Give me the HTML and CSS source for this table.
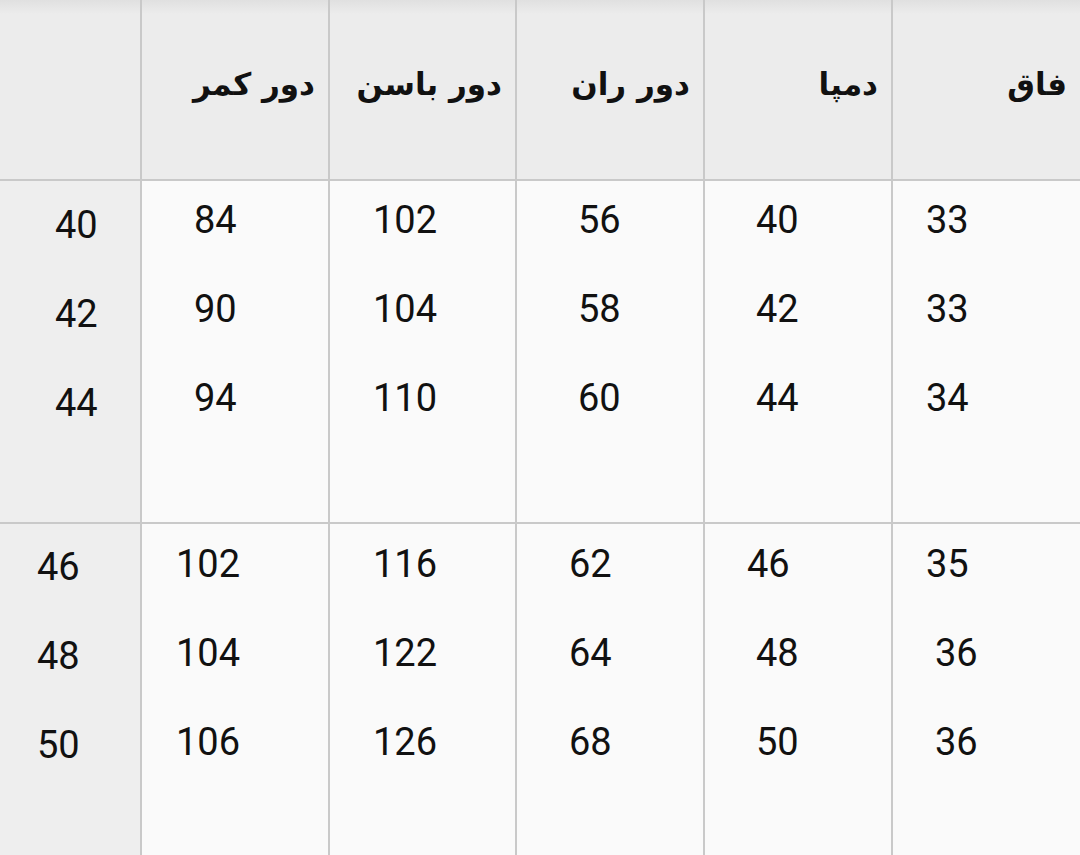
FILE: index.html
```html
<!DOCTYPE html>
<html lang="fa">
<head>
<meta charset="utf-8">
<title>جدول سایز</title>
<link rel="stylesheet" href="styles.css">
</head>
<body>
<div class="table">
  <div class="head head-first"></div>
  <div class="head"><span dir="rtl">دور کمر</span></div>
  <div class="head"><span dir="rtl">دور باسن</span></div>
  <div class="head"><span dir="rtl">دور ران</span></div>
  <div class="head"><span dir="rtl">دمپا</span></div>
  <div class="head"><span dir="rtl">فاق</span></div>

  <div class="cell size g1 c1"><span>40</span><span>42</span><span>44</span></div>
  <div class="cell g1 c2"><span>84</span><span>90</span><span>94</span></div>
  <div class="cell g1 c3"><span>102</span><span>104</span><span>110</span></div>
  <div class="cell g1 c4"><span>56</span><span>58</span><span>60</span></div>
  <div class="cell g1 c5"><span>40</span><span>42</span><span>44</span></div>
  <div class="cell g1 c6"><span>33</span><span>33</span><span>34</span></div>

  <div class="cell size g2 c1"><span>46</span><span>48</span><span>50</span></div>
  <div class="cell g2 c2"><span>102</span><span>104</span><span>106</span></div>
  <div class="cell g2 c3"><span>116</span><span>122</span><span>126</span></div>
  <div class="cell g2 c4"><span>62</span><span>64</span><span>68</span></div>
  <div class="cell g2 c5"><span class="nudge">46</span><span>48</span><span>50</span></div>
  <div class="cell g2 c6"><span class="nudge">35</span><span>36</span><span>36</span></div>
</div>
</body>
</html>
```

FILE: styles.css
```css
html, body {
  margin: 0;
  padding: 0;
  background: #fafafa;
}

.table {
  width: 1080px;
  height: 855px;
  display: grid;
  grid-template-columns: 140px 186px 185px 186px 186px 1fr;
  grid-template-rows: 179px 341px 1fr;
  column-gap: 2px;
  row-gap: 2px;
  background: #c9c9c9;
  overflow: hidden;
}

.head {
  background: linear-gradient(#e0e0e0 0, #ececec 14px, #ececec 100%);
  display: flex;
  align-items: center;
  justify-content: flex-end;
  padding-right: 13px;
  padding-bottom: 12px;
  font-family: "DejaVu Sans", sans-serif;
  font-weight: bold;
  font-size: 31px;
  color: #111;
}

.head-first {
  padding: 0;
}

.cell {
  background: #fafafa;
  display: flex;
  flex-direction: column;
  align-items: flex-start;
  gap: 45px;
  font-family: Roboto, "Liberation Sans", sans-serif;
  font-size: 38px;
  line-height: 44px;
  color: #111;
}

.cell.size {
  background: #eeeeee;
}

.g1 { padding-top: 17px; }
.g2 { padding-top: 18px; }
.g1.size { padding-top: 22px; }
.g2.size { padding-top: 21px; }

.g1.c1 { padding-left: 55px; }
.g2.c1 { padding-left: 37px; }
.g1.c2 { padding-left: 52px; }
.g2.c2 { padding-left: 34px; }
.c3 { padding-left: 43px; }
.g1.c4 { padding-left: 61px; }
.g2.c4 { padding-left: 52px; }
.c5 { padding-left: 51px; }
.g1.c6 { padding-left: 33px; }
.g2.c6 { padding-left: 42px; }

.nudge {
  margin-left: -9px;
}
```
